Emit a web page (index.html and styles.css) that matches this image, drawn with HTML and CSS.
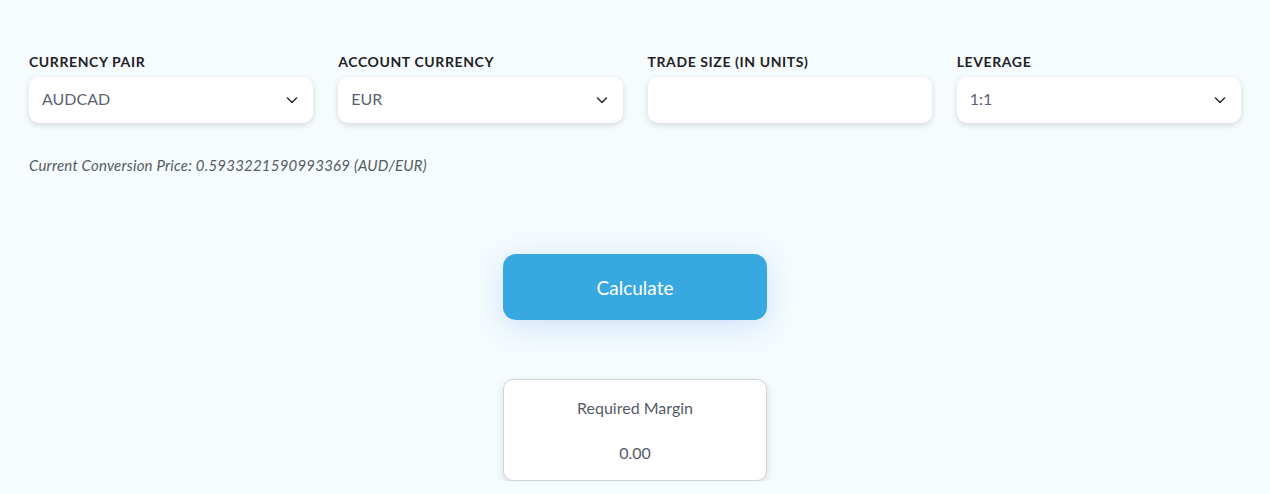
FILE: index.html
```html
<!DOCTYPE html>
<html lang="en">
<head>
  <meta charset="UTF-8" />
  <meta name="viewport" content="width=device-width, initial-scale=1.0"/>
  <title>Margin Calculator</title>
  <link rel="stylesheet" href="styles.css">
</head>
<body>

  <div class="calculator">
    <div class="fields">
      <div class="field">
        <label class="field-label">Currency Pair</label>
        <div class="select-box">
          <span>AUDCAD</span>
          <svg class="chevron" width="14" height="14" viewBox="0 0 14 14"><path d="M2.5 5l4.5 4.5 4.5-4.5" fill="none" stroke="#333" stroke-width="1.6" stroke-linecap="round" stroke-linejoin="round"/></svg>
        </div>
      </div>
      <div class="field">
        <label class="field-label">Account Currency</label>
        <div class="select-box">
          <span>EUR</span>
          <svg class="chevron" width="14" height="14" viewBox="0 0 14 14"><path d="M2.5 5l4.5 4.5 4.5-4.5" fill="none" stroke="#333" stroke-width="1.6" stroke-linecap="round" stroke-linejoin="round"/></svg>
        </div>
      </div>
      <div class="field">
        <label class="field-label">Trade Size (in units)</label>
        <input class="text-box" type="text" value="">
      </div>
      <div class="field">
        <label class="field-label">Leverage</label>
        <div class="select-box">
          <span>1:1</span>
          <svg class="chevron" width="14" height="14" viewBox="0 0 14 14"><path d="M2.5 5l4.5 4.5 4.5-4.5" fill="none" stroke="#333" stroke-width="1.6" stroke-linecap="round" stroke-linejoin="round"/></svg>
        </div>
      </div>
    </div>

    <p class="conversion">Current Conversion Price: 0.5933221590993369 (AUD/EUR)</p>

    <button class="calc-button">Calculate</button>

    <div class="result">
      <div class="result-title">Required Margin</div>
      <div class="result-value">0.00</div>
    </div>
  </div>

</body>
</html>
```

FILE: styles.css
```css
body {
  background: #f6fcfe;
  color: #222;
  font-family: Lato, 'Noto Sans', sans-serif;
  margin: 0;
  padding: 0;
}

.calculator {
  padding: 53px 29px 0 29px;
  display: flex;
  flex-direction: column;
}

.fields {
  display: grid;
  grid-template-columns: repeat(4, 1fr);
  gap: 25px;
}

.field {
  display: flex;
  flex-direction: column;
}

.field-label {
  font-size: 14px;
  font-weight: bold;
  text-transform: uppercase;
  letter-spacing: 0.6px;
  color: #1e2226;
  margin-bottom: 7px;
}

.select-box,
.text-box {
  height: 46px;
  box-sizing: border-box;
  background: #fff;
  border: none;
  border-radius: 10px;
  box-shadow: 0 2px 6px rgba(0, 0, 0, 0.14);
  padding: 0 13px 3px 13px;
  display: flex;
  align-items: center;
  justify-content: space-between;
  font-family: inherit;
  font-size: 16px;
  color: #5c6370;
}

.text-box {
  outline: none;
  width: 100%;
}

.chevron {
  margin-top: 3px;
  margin-right: 1px;
}

.conversion {
  font-size: 15px;
  font-style: italic;
  letter-spacing: 0.2px;
  color: #555a63;
  margin: 33px 0 0 0;
}

.calc-button {
  align-self: center;
  width: 264px;
  height: 66px;
  margin-top: 80px;
  background: #38a8e0;
  color: #fff;
  border: none;
  border-radius: 13px;
  font-family: inherit;
  font-size: 19px;
  cursor: pointer;
  box-shadow: 0 6px 30px rgba(90, 150, 240, 0.28);
}

.result {
  align-self: center;
  width: 264px;
  height: 102px;
  box-sizing: border-box;
  margin-top: 59px;
  background: #fff;
  border: 1px solid #cfd3d6;
  border-radius: 10px;
  box-shadow: 0 3px 8px rgba(0, 0, 0, 0.12);
  text-align: center;
  color: #555b68;
  font-size: 16px;
  padding-top: 18px;
}

.result-value {
  margin-top: 26px;
}
```
